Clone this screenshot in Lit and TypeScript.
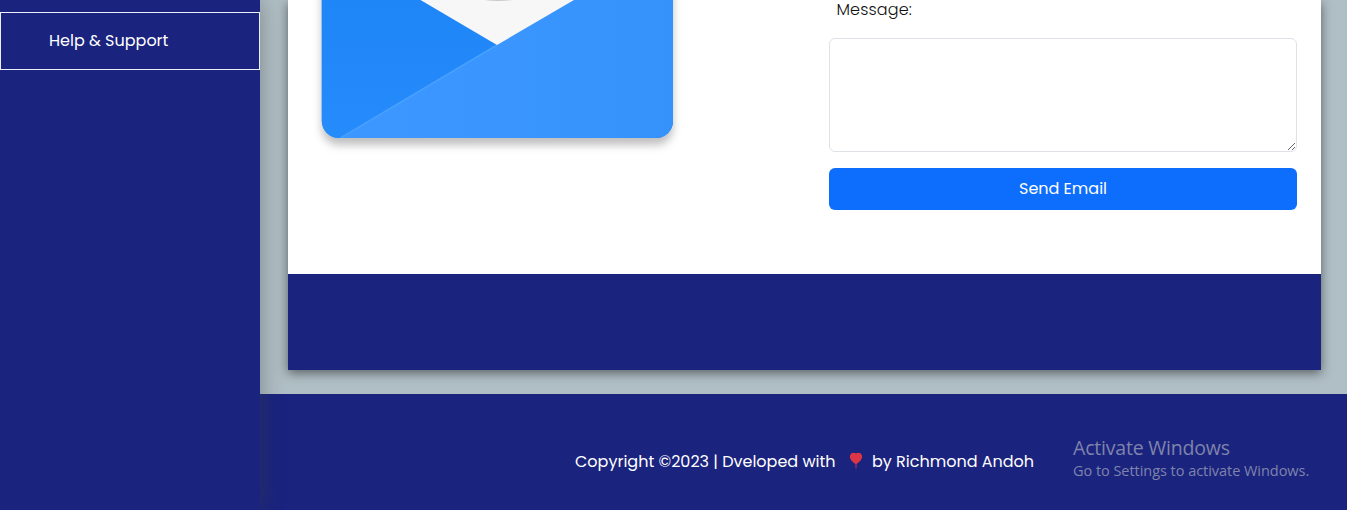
import { LitElement, html, css } from "lit";
import { customElement } from "lit/decorators.js";

@customElement("app-root")
export class AppRoot extends LitElement {
  static styles = css`
    :host {
      display: flex;
      height: 510px;
      overflow: hidden;
      position: relative;
      font: 400 16px/24px Poppins, Inter, "Liberation Sans", sans-serif;
      background: #b0bec5;
      color: #fff;
    }
    * { box-sizing: border-box; }
    .sidebar {
      flex: none;
      width: 260px;
      padding-top: 12px;
      background: #1a237e;
      box-shadow: 0 0 22px rgba(60, 68, 60, 0.45);
      position: relative;
      z-index: 1;
    }
    .nav-item {
      height: 58px;
      border: 1px solid #eceff8;
      padding: 16px 48px;
      color: #fff;
    }
    .content {
      flex: 1;
      min-width: 0;
      display: flex;
      flex-direction: column;
    }
    .card {
      margin: 0 26px 24px 28px;
      height: 370px;
      flex: none;
      display: flex;
      flex-direction: column;
      background: #fff;
      box-shadow: 0 3px 10px rgba(0, 0, 0, 0.5);
    }
    .card-body {
      height: 274px;
      flex: none;
      display: flex;
      justify-content: space-between;
      padding: 0 24px 0 33px;
    }
    .picture {
      width: 352px;
      height: 160px;
      display: block;
      overflow: visible;
    }
    .flap { filter: drop-shadow(0 7px 4px rgba(0, 0, 0, 0.25)); }
    .form { width: 468px; color: #111; }
    .label {
      display: block;
      height: 38px;
      padding: 0 7.5px;
      line-height: 20px;
      font-weight: 300;
    }
    .label span { letter-spacing: 0.14px; }
    textarea {
      display: block;
      width: 100%;
      height: 114px;
      margin: 0 0 16px;
      border: 1px solid #dee2e6;
      border-radius: 6px;
      background: #fff;
      resize: vertical;
      outline: none;
    }
    .send {
      display: block;
      width: 100%;
      height: 42px;
      padding: 0;
      border: 0;
      border-radius: 6px;
      background: #0d6efd;
      color: #fff;
      font: inherit;
    }
    .band { flex: 1; background: #1a237e; }
    .footer {
      flex: 1;
      background: #1a237e;
      display: flex;
      align-items: flex-start;
      padding: 56px 0 0 315px;
      white-space: pre;
    }
    .heart { width: 14px; height: 18px; margin: 2px 9px 0 0; flex: none; }
    .made { width: 274px; }
    .watermark {
      position: absolute;
      z-index: 2;
      left: 1073px;
      top: 435px;
      color: #7f84ab;
      white-space: nowrap;
      font-family: "Segoe UI", "Open Sans", sans-serif;
      font-weight: 400;
    }
    .wm-title { font-size: 19.5px; line-height: 26px; letter-spacing: -0.2px; }
    .wm-text { font-size: 14.5px; line-height: 20px; letter-spacing: -0.04px; }
  `;

  render() {
    return html`
      <nav class="sidebar">
        <div class="nav-item"><span>Help &amp; Support</span></div>
      </nav>
      <main class="content">
        <section class="card">
          <div class="card-body">
            <svg class="picture" viewBox="0 0 352 160">
              <defs>
                <linearGradient id="left" x1="0" y1="0" x2="0" y2="1">
                  <stop offset="0" stop-color="#1f86f7" />
                  <stop offset="1" stop-color="#268bfb" />
                </linearGradient>
                <linearGradient id="right" x1="0" y1="0" x2="1" y2="0">
                  <stop offset="0" stop-color="#3c98ff" />
                  <stop offset=".5" stop-color="#3a95ff" />
                  <stop offset="1" stop-color="#3592fb" />
                </linearGradient>
                <clipPath id="round"><rect x=".8" y="-60" width="351.200" height="198" rx="17" /></clipPath>
              </defs>
              <rect class="flap" x=".8" y="-60" width="351.200" height="198" rx="17" fill="#268bfb" />
              <g clip-path="url(#round)">
                <rect width="352" height="138" fill="url(#left)" />
                <path d="M253 0H352V138H19.500L176 45Z" fill="url(#right)" />
                <path d="M19.500 138L176 45" stroke="#48a0ff" stroke-width="1.500" />
                <path d="M99.500 0H253L176 45Z" fill="#f7f7f7" />
                <path d="M163.500 0H191.500Q177.500 2.200 163.500 0Z" fill="#c9caca" />
              </g>
            </svg>
            <form class="form" @submit=${(e: Event) => e.preventDefault()}>
              <label class="label" for="message"><span>Message:</span></label>
              <textarea id="message"></textarea>
              <button class="send" type="submit"><span>Send Email</span></button>
            </form>
          </div>
          <div class="band"></div>
        </section>
        <footer class="footer">
          <span class="made">Copyright ©2023 | Dveloped with</span>
          <svg class="heart" viewBox="0 0 14 18">
            <path d="M7 1.600C8.700.2 12.800.6 13.100 4.300c.2 3.200-2.700 5.900-5.600 7.700L7.400 16.500H6.600L6.500 12C3.600 10.200.7 7.500.9 4.300 1.200.6 5.300.2 7 1.600Z" fill="#dc3545" />
          </svg>
          <span class="author">by Richmond Andoh</span>
        </footer>
      </main>
      <div class="watermark">
        <div class="wm-title">Activate Windows</div>
        <div class="wm-text">Go to Settings to activate Windows.</div>
      </div>
    `;
  }
}
